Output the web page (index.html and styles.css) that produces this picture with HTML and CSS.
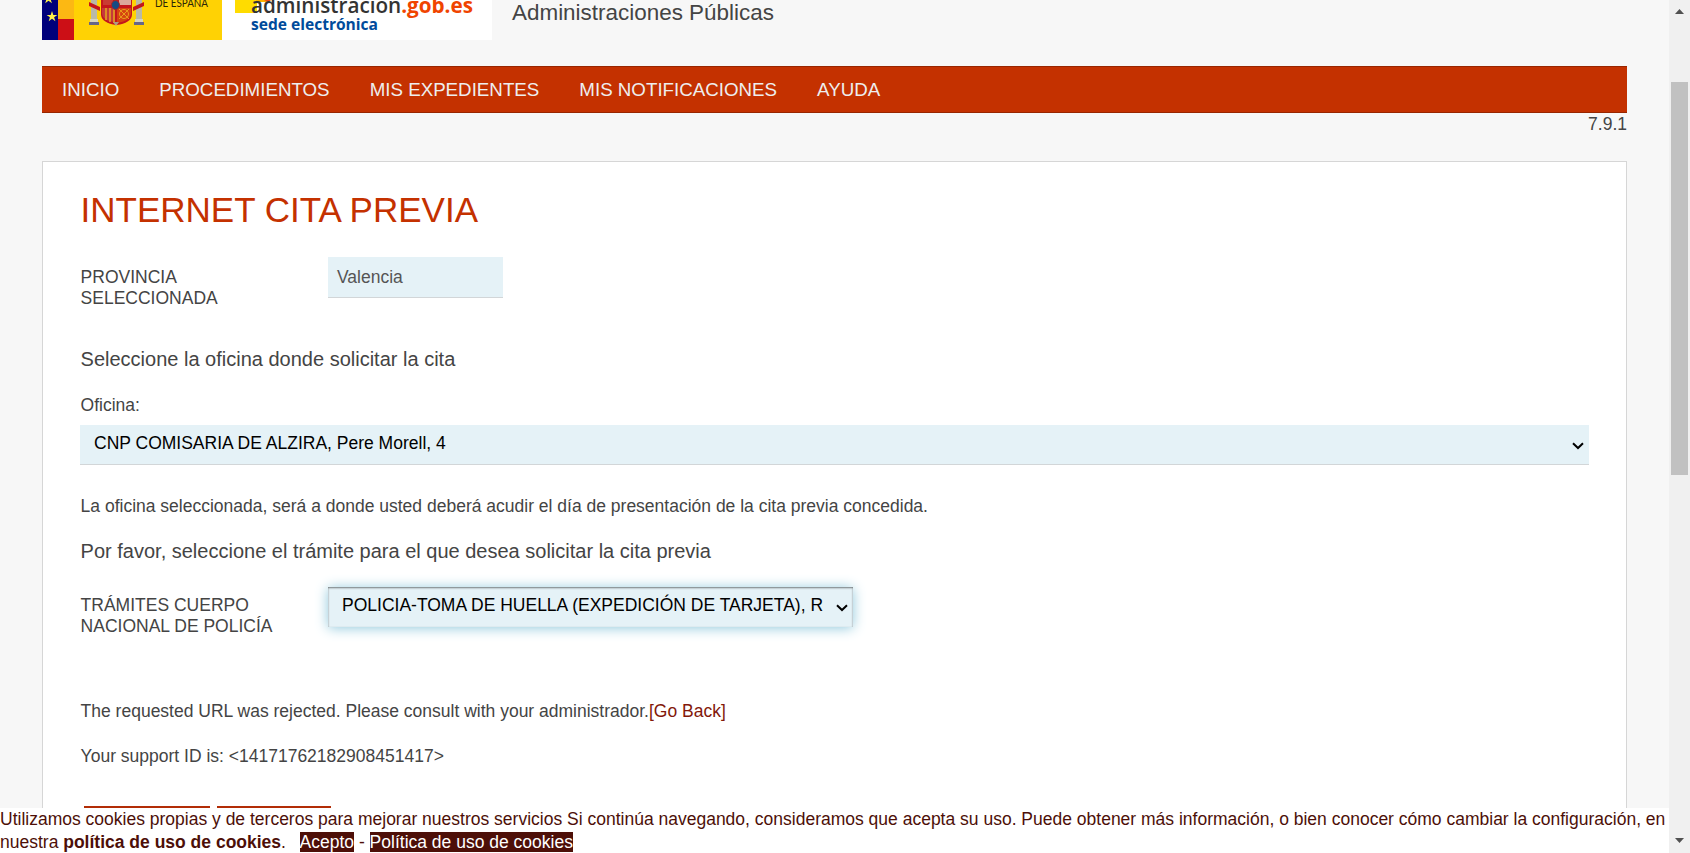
FILE: index.html
```html
<!DOCTYPE html>
<html lang="es">
<head>
<meta charset="utf-8">
<title>Internet cita previa</title>
<link rel="stylesheet" href="styles.css">
</head>
<body>
<div class="window">
  <div class="page">
    <header class="header">
      <svg class="logo" width="450" height="40" viewBox="0 0 450 40">
        <rect width="450" height="40" fill="#fff"/>
        <rect width="180" height="40" fill="#ffd204"/>
        <rect width="16" height="40" fill="#00007b"/>
        <rect x="16" width="16" height="19" fill="#fcb813"/>
        <rect x="16" y="19" width="16" height="21" fill="#cc0f16"/>
        <g fill="#fff24a">
          <path d="M10 11l1.3 3.9h4.1l-3.3 2.4 1.3 3.9-3.4-2.4-3.3 2.4 1.2-3.9-3.3-2.4h4.1z"/>
          <path d="M6.500-7l1.300 3.900h4.100l-3.300 2.400 1.300 3.900-3.400-2.400-3.300 2.400 1.200-3.900-3.300-2.400h4.100z"/>
        </g>
        <g>
          <rect x="49" y="0" width="6" height="20" fill="#b9b9a8"/>
          <rect x="94" y="0" width="6" height="20" fill="#b9b9a8"/>
          <path d="M47 2l11 5v4l-11-5zM102 2l-11 5v4l11-5z" fill="#c4161c"/>
          <path d="M47 22h10v3H47zM92 22h10v3H92z" fill="#668"/>
          <path d="M48 19h8v3h-8zM93 19h8v3h-8z" fill="#d8d5bd"/>
          <path d="M59 0h31v15q-1 8-15.500 10Q60 23 59 15z" fill="#c4161c"/>
          <path d="M60 8h13v14q-12-1-13-8z" fill="#c53a3a"/>
          <path d="M64 8v12M68 8v14M72 8v15" stroke="#e9b01c" stroke-width="1.400"/>
          <path d="M75 8h14v6q-1 7-14 9z" fill="#d64310"/>
          <circle cx="82" cy="14" r="4.500" fill="none" stroke="#e9a01c"/>
          <path d="M77 9l10 10M87 9L77 19" stroke="#e9a01c"/>
          <path d="M61 0h10v5H61z" fill="#c93b32"/>
          <path d="M77 0h12v5H77z" fill="#dba89a"/>
          <ellipse cx="73.500" cy="5" rx="4" ry="4.500" fill="#164b83" stroke="#a52822"/>
          <path d="M71 22h6l-3 4z" fill="#ad9d83"/>
        </g>
        <text class="logo-state" x="113" y="6.500" textLength="53" lengthAdjust="spacingAndGlyphs">DE ESPAÑA</text>
        <path d="M193 0h22v13h-22z" fill="#ffdc00"/>
        <path d="M214 0h15l-3 2h-12z" fill="#ffb400"/>
        <path d="M222 0h7l-3 2z" fill="#ee4b12"/>
        <text class="logo-name" x="209" y="12.500" textLength="222" lengthAdjust="spacingAndGlyphs">administración<tspan class="logo-domain">.gob.es</tspan></text>
        <text class="logo-sede" x="209" y="29.500" textLength="127" lengthAdjust="spacingAndGlyphs">sede electrónica</text>
      </svg>
      <span class="ministry">Administraciones Públicas</span>
    </header>
    <nav class="nav">
      <a>INICIO</a><a>PROCEDIMIENTOS</a><a>MIS EXPEDIENTES</a><a>MIS NOTIFICACIONES</a><a>AYUDA</a>
    </nav>
    <div class="version">7.9.1</div>
    <main class="panel">
      <h1>INTERNET CITA PREVIA</h1>
      <div class="row">
        <div class="label label-province">PROVINCIA SELECCIONADA</div>
        <div class="field">Valencia</div>
      </div>
      <h2 class="office-title">Seleccione la oficina donde solicitar la cita</h2>
      <p class="office-label">Oficina:</p>
      <div class="select">
        <span>CNP COMISARIA DE ALZIRA, Pere Morell, 4</span>
        <svg class="chevron" width="12" height="8" viewBox="0 0 12 8"><path d="M1 1.200l5 4.800 5-4.800"/></svg>
      </div>
      <p class="office-note">La oficina seleccionada, será a donde usted deberá acudir el día de presentación de la cita previa concedida.</p>
      <h2 class="task-title">Por favor, seleccione el trámite para el que desea solicitar la cita previa</h2>
      <div class="row row-task">
        <div class="label">TRÁMITES CUERPO NACIONAL DE POLICÍA</div>
        <div class="select select-focus">
          <span>POLICIA-TOMA DE HUELLA (EXPEDICIÓN DE TARJETA), R</span>
          <svg class="chevron" width="12" height="8" viewBox="0 0 12 8"><path d="M1 1.200l5 4.800 5-4.800"/></svg>
        </div>
      </div>
      <p class="rejected">The requested URL was rejected. Please consult with your administrador.<a class="back">[Go Back]</a></p>
      <p class="support">Your support ID is: &lt;14171762182908451417&gt;</p>
      <div class="buttons"><span class="btn btn-a"></span><span class="btn btn-b"></span></div>
    </main>
  </div>
  <div class="scrollbar">
    <svg width="9" height="5" viewBox="0 0 9 5"><path d="M0 5L4.500 0 9 5z"/></svg>
    <div class="thumb"></div>
    <svg class="down" width="9" height="5" viewBox="0 0 9 5"><path d="M0 0h9L4.500 5z"/></svg>
  </div>
  <div class="cookies">Utilizamos cookies propias y de terceros para mejorar nuestros servicios Si continúa navegando, consideramos que acepta su uso. Puede obtener más información, o bien conocer cómo cambiar la configuración, en<br>nuestra <b>política de uso de cookies</b>. &nbsp; <a class="chip">Acepto</a> - <a class="chip">Política de uso de cookies</a></div>
</div>
</body>
</html>
```
FILE: styles.css
```css
* { box-sizing: border-box; }
body {
  margin: 0;
  font-family: "Liberation Sans", Arial, sans-serif;
  font-size: 17.5px;
  line-height: 22px;
  color: #444;
  background: #f7f7f7;
}
h1, h2, p { margin: 0; padding-left: 0.6px; font-weight: normal; }
.window { position: relative; display: flex; height: 853px; overflow: hidden; }
.page { flex: 1; padding: 0 42px; overflow: hidden; }

.header { display: flex; height: 66px; }
.logo { display: block; flex: none; }
.logo text { font-family: "Open Sans", sans-serif; }
.logo .logo-state { font-family: Lato, sans-serif; font-size: 11px; fill: #2b2608; }
.logo .logo-name { font-size: 21px; font-weight: 600; fill: #333; }
.logo .logo-domain { font-weight: 700; fill: #f04400; }
.logo .logo-sede { font-size: 16px; font-weight: 700; fill: #004b9b; }
.ministry { margin-left: 20px; font-size: 22.45px; line-height: 26px; }

.nav {
  display: flex;
  height: 47px;
  background: #c43100;
  border-top: 1px solid #982600;
  border-bottom: 1px solid #982600;
}
.nav a { padding: 0 20px; font-size: 18.74px; line-height: 45px; color: #eee; white-space: nowrap; }
.version { height: 48px; text-align: right; }

.panel {
  height: 800px;
  padding: 28px 37px 0;
  background: #fff;
  border: 1px solid #d6d6d6;
}
h1 { font-size: 35px; line-height: 40px; color: #c43100; }
h2 { font-size: 20px; line-height: 24px; }
.row { display: flex; align-items: flex-start; margin-top: 27px; }
.row-task { margin-top: 24px; }
.label { width: 248px; padding: 8px 40px 0 0.6px; line-height: 21px; }
.label-province { padding: 10px 90px 0 0.6px; }
.field {
  width: 175px;
  height: 41px;
  padding-left: 9px;
  line-height: 40px;
  color: #555;
  background: #e5f2f7;
  border-bottom: 1px solid #d2d6d8;
}
.office-title { margin-top: 38px; }
.office-label { margin-top: 23px; }
.select {
  display: flex;
  justify-content: space-between;
  height: 40px;
  margin-top: 9px;
  padding: 0 5px 0 14px;
  line-height: 37px;
  color: #000;
  background: #e5f2f7;
  border-bottom: 1px solid #d2d6d8;
  white-space: nowrap;
}
.select-focus {
  width: 525px;
  margin-top: 0;
  border: 0;
  box-shadow: inset 0 1px 2px rgba(0, 0, 0, .5), 0 1px 13px #8fc8dc;
}
.chevron { margin-top: 17px; fill: none; stroke: #000; stroke-width: 2; }
.office-note { margin-top: 30px; }
.task-title { margin-top: 22px; }
.rejected { margin-top: 63px; }
.back { color: #82180a; }
.support { margin-top: 23px; }
.buttons { display: flex; gap: 7px; margin-top: 39px; padding-left: 4px; }
.btn { height: 40px; background: #b22d06; }
.btn-a { width: 126px; }
.btn-b { width: 114px; }

.scrollbar {
  display: flex;
  flex-direction: column;
  align-items: center;
  width: 21px;
  padding: 9px 0 10px;
  background: #f0f0f0;
}
.scrollbar svg { fill: #505050; }
.thumb { width: 17px; height: 393px; margin-top: 68px; background: #c1c1c1; }
.down { margin-top: auto; }

.cookies {
  position: absolute;
  left: 0;
  bottom: 0;
  width: 1669px;
  height: 45px;
  line-height: 23px;
  color: #4d0f08;
  background: #fff;
  white-space: nowrap;
}
.chip { color: #fff; background: #4d0f08; }
```
